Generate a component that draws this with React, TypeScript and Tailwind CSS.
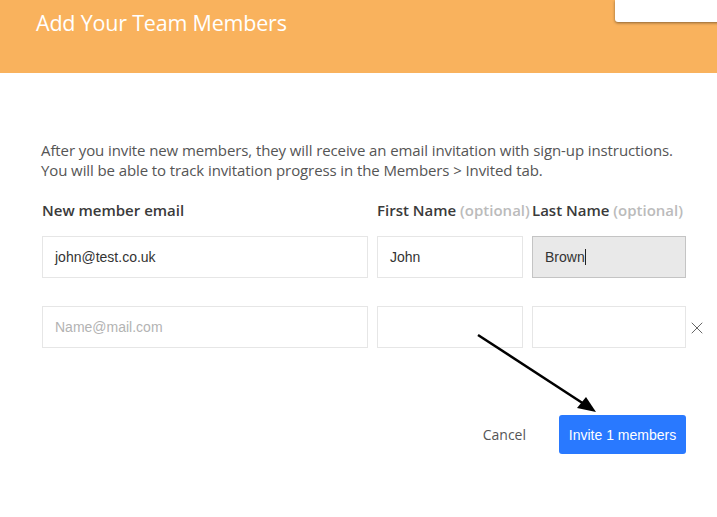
import { X } from "lucide-react";

const openSans = "font-['Open_Sans',sans-serif]";
const arial = "font-['Liberation_Sans',Arial,sans-serif]";

function Field({
  width,
  value,
  placeholder,
  active,
}: {
  width: string;
  value?: string;
  placeholder?: string;
  active?: boolean;
}) {
  return (
    <div
      className={`${width} h-[42px] flex items-center px-[12px] border text-[14px] ${arial} ${
        active ? "bg-[#e9e9e9] border-[#c4c4c4]" : "bg-white border-[#e6e6e6]"
      }`}
    >
      {value ? (
        <span className="text-[#333]">
          {value}
          {active && <span className="inline-block w-px h-[16px] bg-[#222] align-middle -mt-[2px]" />}
        </span>
      ) : (
        <span className="text-[#b3b3b3]">{placeholder}</span>
      )}
    </div>
  );
}

export default function App() {
  return (
    <div className={`relative w-[717px] h-[517px] bg-white overflow-hidden ${openSans}`}>
      {/* Header */}
      <div className="h-[73px] bg-[#f9b25d] pl-[36px] pt-[8px]">
        <h1 className="text-[21.5px] leading-[30px] text-white font-normal tracking-[-0.2px]">
          Add Your Team Members
        </h1>
      </div>

      {/* Overlapping card corner */}
      <div className="absolute top-0 left-[615px] w-[110px] h-[22px] bg-white rounded-bl-[3px] shadow-[0_1px_3px_rgba(0,0,0,0.45)]" />

      <div className="pl-[41px] pt-[67px]">
        <p className="text-[15px] leading-[20px] text-[#555] tracking-[-0.1px]">
          After you invite new members, they will receive an email invitation with sign-up instructions.
          <br />
          You will be able to track invitation progress in the Members &gt; Invited tab.
        </p>

        <div className="flex gap-[9px] mt-[20px] pl-[1px] text-[15px] leading-[20px] font-semibold text-[#3a3a3a] whitespace-nowrap">
          <div className="w-[326px]">New member email</div>
          <div className="w-[146px]">
            First Name <span className="text-[#bbb]">(optional)</span>
          </div>
          <div className="w-[154px]">
            Last Name <span className="text-[#bbb]">(optional)</span>
          </div>
        </div>

        <div className="flex gap-[9px] mt-[16px] pl-[1px]">
          <Field width="w-[326px]" value="john@test.co.uk" />
          <Field width="w-[146px]" value="John" />
          <Field width="w-[154px]" value="Brown" active />
        </div>

        <div className="flex items-center gap-[9px] mt-[28px] pl-[1px]">
          <Field width="w-[326px]" placeholder="Name@mail.com" />
          <Field width="w-[146px]" />
          <Field width="w-[154px]" />
          <X className="w-[20px] h-[20px] text-[#666] -ml-[8px] mt-[2px]" strokeWidth={1.2} />
        </div>

        <div className="flex justify-end items-center gap-[33px] mt-[67px] pr-[31px]">
          <button className="text-[14px] text-[#555]">Cancel</button>
          <button
            className={`w-[127px] h-[39px] rounded-[3px] bg-[#2979ff] text-white text-[14px] leading-[20px] pt-[1px] ${arial}`}
          >
            Invite 1 members
          </button>
        </div>
      </div>

      {/* Annotation arrow */}
      <svg className="absolute left-0 top-0 pointer-events-none" width="717" height="517">
        <line x1="478" y1="335" x2="584" y2="404" stroke="#000" strokeWidth="2.5" />
        <polygon points="596,412 577,408 586,397" fill="#000" />
      </svg>
    </div>
  );
}
